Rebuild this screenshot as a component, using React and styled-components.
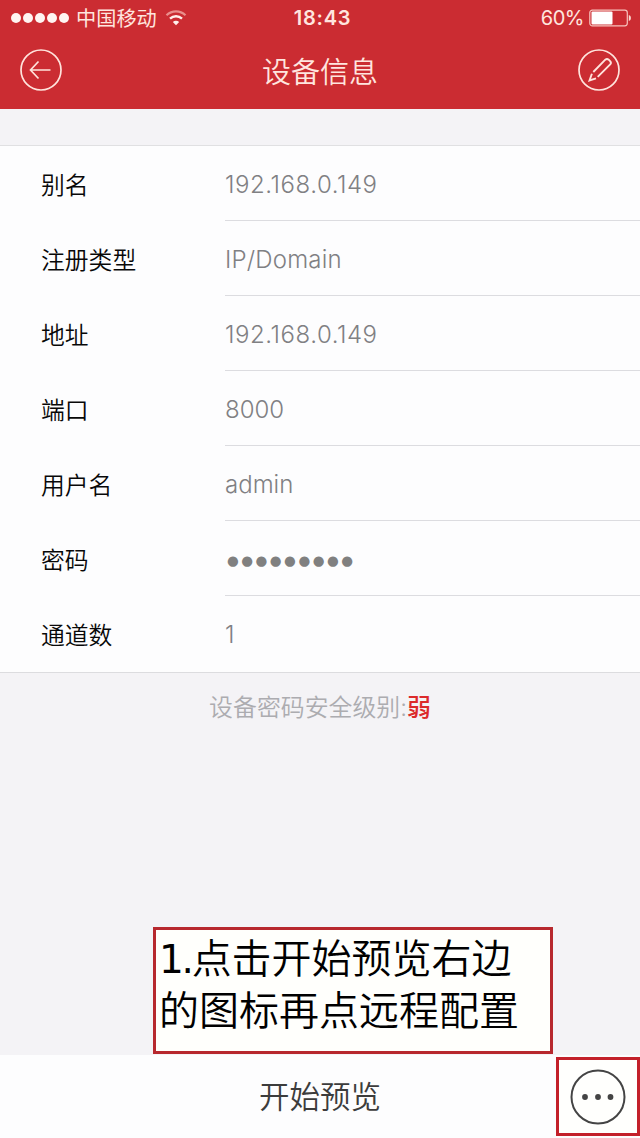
import styled, { createGlobalStyle, css } from 'styled-components'

const fields = [
  { label: '别名', value: '192.168.0.149', spacing: '.55px' },
  { label: '注册类型', value: 'IP/Domain', spacing: '.2px' },
  { label: '地址', value: '192.168.0.149', spacing: '.55px' },
  { label: '端口', value: '8000' },
  { label: '用户名', value: 'admin' },
  { label: '密码', value: '●●●●●●●●●', secret: true },
  { label: '通道数', value: '1' }
]

const StatusBar = () => (
  <Status>
    <StatusSide>
      <Signal>
        {[0, 1, 2, 3, 4].map(i => <SignalDot key={i} />)}
      </Signal>
      <Carrier>中国移动</Carrier>
      <svg width='22' height='16' viewBox='0 0 22 16' fill='none'>
        <path d='M1.5 5.2C7 .1 15 .1 20.500 5.200' stroke='#e98f8c' strokeWidth='2.200' />
        <path d='M5 8.700C8.500 5.400 13.500 5.400 17 8.700' stroke='#fff0ec' strokeWidth='2.400' />
        <path d='M11 15.200L7.800 12C9.600 10.200 12.400 10.200 14.200 12Z' fill='#fff0ec' />
      </svg>
    </StatusSide>
    <Clock>18:43</Clock>
    <StatusSide right>
      <Percent>60%</Percent>
      <svg width='43' height='18' viewBox='0 0 43 18' fill='none'>
        <rect x='.8' y='1.200' width='37.500' height='15.600' rx='2.500' stroke='#f7c4bd' strokeWidth='1.200' />
        <rect x='2.500' y='2.500' width='21' height='13' rx='1' fill='#fff' />
        <path d='M39.800 6C42.600 6.600 42.600 11.400 39.800 12Z' fill='#fbd9d0' />
      </svg>
    </StatusSide>
  </Status>
)

const BackIcon = () => (
  <svg width='42' height='42' viewBox='0 0 42 42' fill='none' stroke='#ffe3dc' strokeWidth='1.700'>
    <circle cx='21' cy='21' r='20' />
    <path d='M30.500 21H10.800M18.500 12.500L10.500 21L18.500 29.500' />
  </svg>
)

const EditIcon = () => (
  <svg width='42' height='42' viewBox='0 0 42 42' fill='none' stroke='#ffe3dc' strokeWidth='1.700'>
    <circle cx='21' cy='21' r='20' />
    <path d='M15.300 23L27.300 10.700Q29 9.200 30.700 10.700L32.300 12.300Q33.600 13.800 32.200 15.400L19.700 27.900' strokeWidth='1.900' />
    <path d='M13.900 24.800L11.500 31.500L18 29.400' strokeWidth='1.900' />
  </svg>
)

const App = () => (
  <>
    <GlobalStyle />
    <Screen>
      <Header>
        <StatusBar />
        <NavBar>
          <IconButton aria-label='返回'><BackIcon /></IconButton>
          <Title>设备信息</Title>
          <IconButton aria-label='编辑'><EditIcon /></IconButton>
        </NavBar>
      </Header>
      <Panel>
        {fields.map(field => (
          <Row key={field.label}>
            <Label>{field.label}</Label>
            <Value secret={field.secret} spacing={field.spacing}>{field.value}</Value>
          </Row>
        ))}
      </Panel>
      <Security>设备密码安全级别:<Weak>弱</Weak></Security>
      <Note>
        <div><NoteNumber>1.</NoteNumber>点击开始预览右边</div>
        <div>的图标再点远程配置</div>
      </Note>
      <Footer>
        <Preview>开始预览</Preview>
        <More aria-label='更多'>
          <svg width='56' height='56' viewBox='0 0 56 56' fill='#444'>
            <circle cx='28' cy='28' r='26.500' fill='none' stroke='#444' strokeWidth='2' />
            <circle cx='15' cy='28' r='2.900' />
            <circle cx='28' cy='28' r='2.900' />
            <circle cx='40.500' cy='28' r='2.900' />
          </svg>
        </More>
      </Footer>
    </Screen>
  </>
)

const GlobalStyle = createGlobalStyle`
  * {
    box-sizing: border-box;
  }

  body {
    margin: 0;
    font-family: Inter, 'Noto Sans CJK SC', sans-serif;
  }

  svg {
    display: block;
    flex-shrink: 0;
  }
`

const Screen = styled.div`
  width: 640px;
  height: 1138px;
  background-color: #f4f3f6;
  display: flex;
  flex-direction: column;
  overflow: hidden;
`

const Header = styled.header`
  height: 109px;
  background-color: #cb2c32;
  color: #ffe5df;
`

const Status = styled.div`
  height: 35px;
  padding: 0 8px 0 11px;
  display: grid;
  grid-template-columns: 1fr auto 1fr;
  align-items: center;
`

const StatusSide = styled.div.withConfig({ shouldForwardProp: p => p !== 'right' })`
  display: flex;
  align-items: center;
  ${props => props.right && css`
    justify-content: flex-end;
    gap: 5px;
  `}
`

const Signal = styled.div`
  display: flex;
  gap: 2px;
`

const SignalDot = styled.span`
  width: 10px;
  height: 10px;
  border-radius: 50%;
  background-color: #fff5f2;
`

const Carrier = styled.span`
  font-size: 20.200px;
  line-height: 30px;
  margin: 2px 8px 0 7px;
`

const Clock = styled.span`
  margin-left: 2px;
  font-size: 20px;
  font-weight: 600;
  letter-spacing: .8px;
`

const Percent = styled.span`
  font-size: 20px;
  letter-spacing: -.5px;
`

const NavBar = styled.div`
  height: 70px;
  padding: 0 20px;
  display: flex;
  align-items: center;
  justify-content: space-between;
`

const IconButton = styled.button`
  padding: 0;
  border: 0;
  background: none;
`

const Title = styled.h1`
  margin: 6px 0 0;
  font-size: 29px;
  line-height: 40px;
  font-weight: 350;
`

const Panel = styled.section`
  height: 528px;
  margin-top: 36px;
  background-color: #fdfdfe;
  border-top: 1px solid #e0e0e2;
  border-bottom: 1px solid #dcdcdf;
`

const Row = styled.div`
  height: 75px;
  padding-left: 41px;
  display: flex;
`

const Label = styled.div`
  width: 184px;
  color: #080808;
  font-size: 23.8px;
  line-height: 79px;
  font-weight: 350;
`

const Value = styled.div.withConfig({ shouldForwardProp: p => !['secret', 'spacing'].includes(p) })`
  flex: 1;
  color: #808083;
  font-size: 24px;
  font-weight: 360;
  letter-spacing: ${props => props.spacing || 'normal'};
  line-height: 77px;
  border-bottom: 1px solid #dcdce0;

  ${Row}:last-child & {
    border-bottom: 0;
  }

  ${props => props.secret && css`
    color: #808080;
    font-family: 'DejaVu Sans', sans-serif;
    font-size: 13.500px;
    font-weight: 400;
    letter-spacing: 2.500px;
    line-height: 79px;
    padding-left: 2px;
  `}
`

const Security = styled.p`
  margin: 18px 0 0;
  color: #acacb0;
  font-size: 23.900px;
  line-height: 34px;
  font-weight: 350;
  text-align: center;
`

const Weak = styled.span`
  color: #dc2a2b;
  font-weight: 500;
`

const Note = styled.div`
  width: 400px;
  height: 127px;
  margin: auto 0 1px 153px;
  padding: 3px 0 0 3px;
  background-color: #fffffc;
  border: 3px solid #b7282e;
  color: #000;
  font-size: 40px;
  line-height: 51px;
  font-weight: 350;
  white-space: nowrap;
`

const NoteNumber = styled.span`
  font-family: 'DejaVu Sans', sans-serif;
  font-size: 39px;
  font-weight: 400;
  letter-spacing: -2.300px;
`

const Footer = styled.footer`
  height: 83px;
  background-color: #fdfdfe;
  display: grid;
  grid-template-columns: 84px 1fr 84px;
`

const Preview = styled.div`
  grid-column: 2;
  color: #3c3c3c;
  font-size: 30.500px;
  line-height: 84px;
  font-weight: 350;
  text-align: center;
`

const More = styled.button`
  height: 79px;
  margin-top: 2px;
  padding: 0;
  background-color: #fffffd;
  border: 3px solid #c3202a;
  display: flex;
  align-items: center;
  justify-content: center;
`

export default App
